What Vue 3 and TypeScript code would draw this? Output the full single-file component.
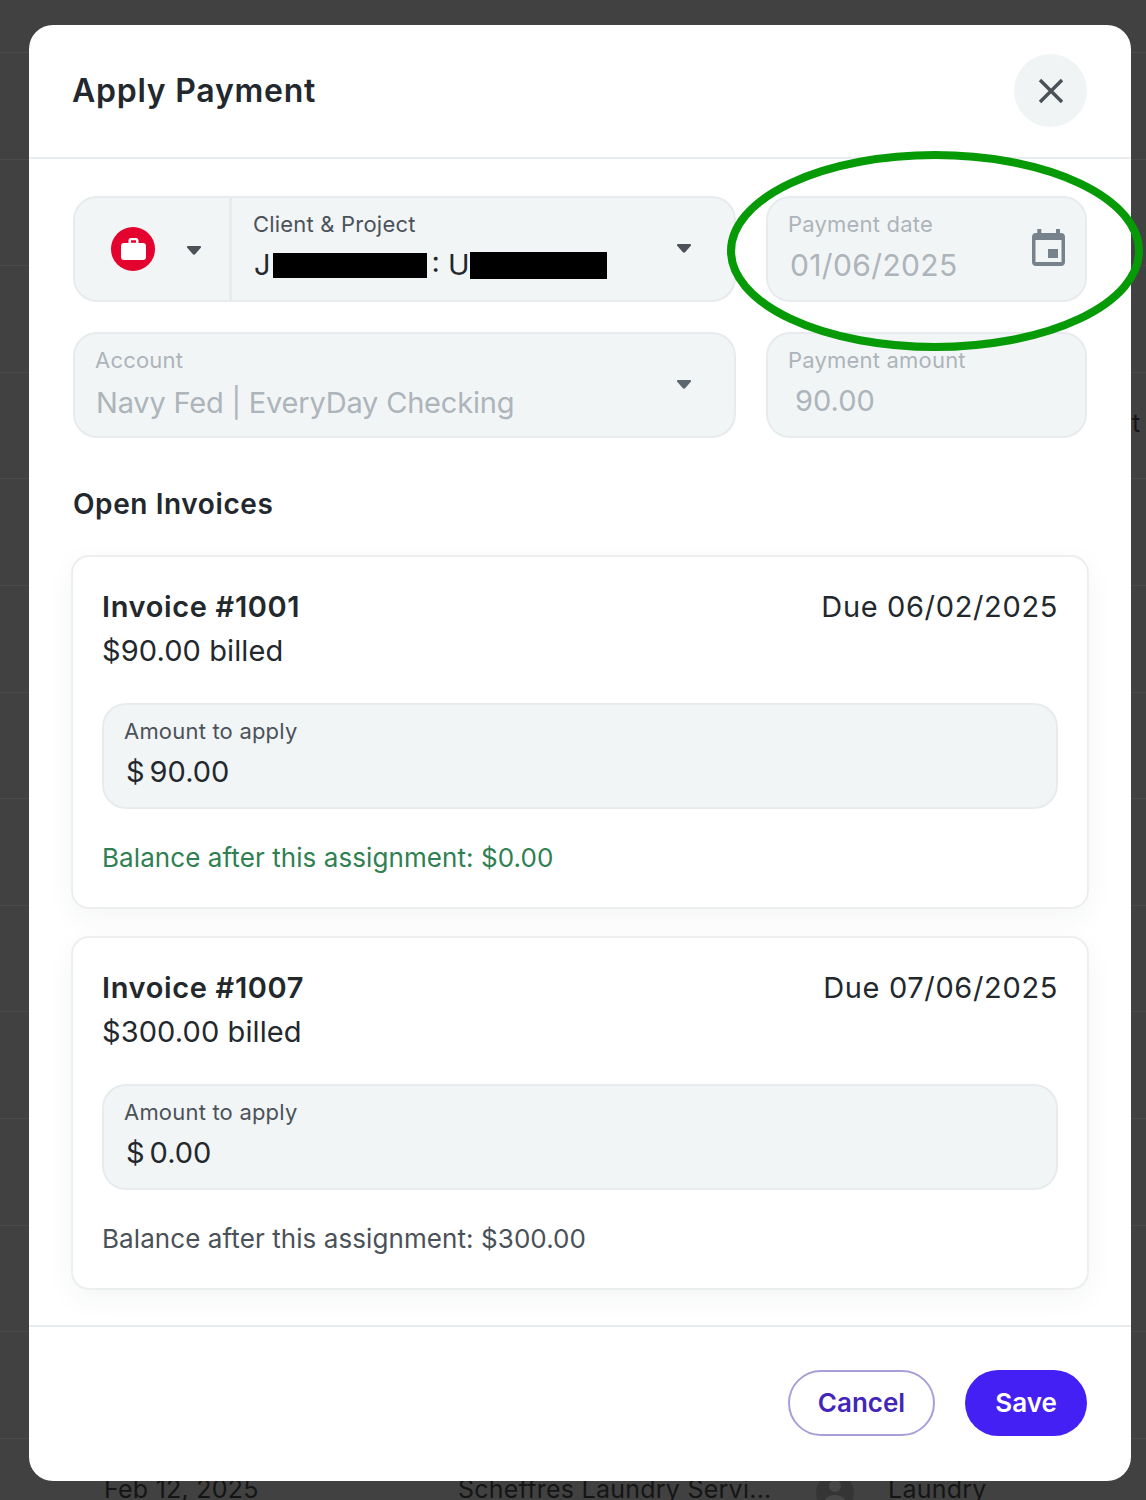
<script setup lang="ts">
interface Invoice {
  id: string
  due: string
  billed: string
  amount: string
  balance: string
  paid: boolean
}

const invoices: Invoice[] = [
  { id: 'Invoice #1001', due: 'Due 06/02/2025', billed: '$90.00 billed', amount: '90.00', balance: 'Balance after this assignment: $0.00', paid: true },
  { id: 'Invoice #1007', due: 'Due 07/06/2025', billed: '$300.00 billed', amount: '0.00', balance: 'Balance after this assignment: $300.00', paid: false },
]
const rows = Array.from({ length: 14 })
const caretPath = 'M1 0h12c1 0 1.400 1 .8 1.800L8.100 8.200c-.6.600-1.600.600-2.200 0L.2 1.800C-.4 1 0 0 1 0z'
</script>

<template>
  <div class="page">
    <div class="backdrop">
      <div v-for="(_, i) in rows" :key="i" class="bg-row"></div>
      <div class="bg-last">
        <span class="bg-date">Feb 12, 2025</span>
        <span class="bg-name">Scheffres Laundry Servi...</span>
        <svg class="bg-avatar" width="38" height="38" viewBox="0 0 38 38">
          <circle cx="19" cy="19" r="19" fill="#353535" />
          <circle cx="19" cy="12" r="6" fill="#474747" />
          <path d="M8 30c0-6 5-9 11-9s11 3 11 9z" fill="#474747" />
        </svg>
        <span class="bg-cat">Laundry</span>
      </div>
    </div>
    <span class="bg-t">t</span>

    <section class="modal">
      <header class="head">
        <h1>Apply Payment</h1>
        <button class="close" aria-label="Close">
          <svg width="28" height="28" viewBox="0 0 28 28"><path d="M3 3 L25 25 M25 3 L3 25" stroke="#4a5158" stroke-width="3.400" fill="none" /></svg>
        </button>
      </header>

      <div class="body">
        <div class="fields">
          <div class="field client">
            <div class="picker">
              <span class="badge">
                <svg width="25" height="22" viewBox="0 0 25 22"><path d="M7.500 5V2.500C7.500 1 8.500 0 10 0h5c1.500 0 2.500 1 2.500 2.500V5H22c2 0 3 1 3 3v11c0 2-1 3-3 3H3c-2 0-3-1-3-3V8c0-2 1-3 3-3zm2.500-.2h5V2.300h-5z" fill="#fff" fill-rule="evenodd" /></svg>
              </span>
              <svg class="caret picker-caret" width="14" height="9" viewBox="0 0 14 9"><path :d="caretPath" fill="#4d5258" /></svg>
            </div>
            <div class="client-main">
              <label class="lab dark-lab">Client &amp; Project</label>
              <div class="val client-val">
                <span>J</span><i class="redact r1"></i><span class="colon">: U</span><i class="redact r2"></i>
              </div>
            </div>
            <svg class="caret right" width="14" height="9" viewBox="0 0 14 9"><path :d="caretPath" fill="#4d5258" /></svg>
          </div>

          <div class="field muted">
            <label class="lab">Payment date</label>
            <div class="val date">01/06/2025</div>
            <svg class="cal" width="33" height="37" viewBox="0 0 33 37"><path d="M5.300 0h4v4h14.700V0h4v4H29c2.500 0 4 1.500 4 4v25c0 2.500-1.500 4-4 4H4c-2.500 0-4-1.500-4-4V8c0-2.500 1.500-4 4-4h1.300zM3.500 11v22h26V11zM16 20h10v9H16z" fill="#76838d" fill-rule="evenodd" /></svg>
          </div>

          <div class="field muted">
            <label class="lab">Account</label>
            <div class="val acct">Navy Fed | EveryDay Checking</div>
            <svg class="caret right" width="14" height="9" viewBox="0 0 14 9"><path :d="caretPath" fill="#5c6770" /></svg>
          </div>

          <div class="field muted">
            <label class="lab">Payment amount</label>
            <div class="val amt">90.00</div>
          </div>
        </div>

        <h2>Open Invoices</h2>

        <article v-for="inv in invoices" :key="inv.id" class="card">
          <div class="card-top">
            <div>
              <div class="inv-id">{{ inv.id }}</div>
              <div class="inv-billed">{{ inv.billed }}</div>
            </div>
            <div class="inv-due">{{ inv.due }}</div>
          </div>
          <div class="apply">
            <label class="lab dark-lab">Amount to apply</label>
            <div class="val apply-val"><span class="cur">$</span>{{ inv.amount }}</div>
          </div>
          <div class="balance" :class="{ paid: inv.paid }">{{ inv.balance }}</div>
        </article>
      </div>

      <footer class="foot">
        <button class="btn cancel">Cancel</button>
        <button class="btn save">Save</button>
      </footer>
    </section>

    <svg class="ring" width="424" height="208" viewBox="0 0 424 208">
      <ellipse cx="212" cy="104" rx="204" ry="96" fill="none" stroke="#069a06" stroke-width="8" />
    </svg>
  </div>
</template>

<style>
html, body { margin: 0; padding: 0; }
</style>

<style scoped>
.page {
  position: relative;
  width: 1146px;
  height: 1500px;
  overflow: hidden;
  background: #414142;
  font-family: Inter, "Noto Sans", sans-serif;
  color: #23282d;
}
.backdrop { padding-top: 52px; }
.bg-row { height: 105.600px; border-top: 1px solid #4a4a4b; }
.bg-last {
  position: absolute;
  left: 0;
  top: 1474px;
  width: 100%;
  height: 26px;
  overflow: hidden;
  font-size: 25px;
  line-height: 30px;
  letter-spacing: 0.250px;
  color: #151515;
}
.bg-last span, .bg-avatar { position: absolute; top: 0; white-space: nowrap; }
.bg-date { left: 104px; }
.bg-name { left: 458px; }
.bg-avatar { left: 816px; }
.bg-cat { left: 888px; }
.bg-t { position: absolute; left: 1132px; top: 408px; font-size: 25px; line-height: 30px; color: #151515; }

.modal {
  position: absolute;
  left: 29px;
  top: 25px;
  width: 1102px;
  height: 1456px;
  background: #fff;
  border-radius: 24px;
  display: flex;
  flex-direction: column;
  overflow: hidden;
}
.head {
  flex: none;
  border-bottom: 2px solid #e9ecee;
  padding: 29px 44px 0;
  display: flex;
  justify-content: space-between;
  align-items: flex-start;
  height: 103px;
}
h1 { margin: 0 0 0 -1px; font-size: 32px; font-weight: 600; line-height: 73px; letter-spacing: 0.750px; color: #22282d; }
.close {
  width: 73px;
  height: 73px;
  border: 0;
  padding: 0;
  border-radius: 50%;
  background: #f1f4f5;
  display: flex;
  align-items: center;
  justify-content: center;
}
.body { padding: 37px 44px 0; flex: 1; }
.fields {
  display: grid;
  grid-template-columns: 663px 321px;
  grid-auto-rows: 106px;
  gap: 30px;
}
.field {
  position: relative;
  background: #f2f5f6;
  border: 2px solid #e8ebed;
  border-radius: 24px;
  box-sizing: border-box;
  padding: 12px 20px 0;
}
.lab { display: block; font-size: 22px; line-height: 28px; letter-spacing: 0.200px; color: #adb4ba; white-space: nowrap; }
.dark-lab { color: #4b5259; }
.val { font-size: 29px; line-height: 36px; margin: 9px 0 0 2px; color: #adb4ba; white-space: nowrap; }
.date { font-size: 30px; letter-spacing: 0.350px; }
.acct { margin-top: 11px; letter-spacing: -0.200px; margin-left: 1px; }
.amt { margin: 9px 0 0 7px; }
.client { display: flex; padding: 0; }
.picker {
  width: 157px;
  flex: none;
  border-right: 3px solid #e8ebed;
  box-sizing: border-box;
  display: flex;
  align-items: center;
  padding-left: 36px;
  gap: 32px;
}
.badge {
  width: 44px;
  height: 44px;
  flex: none;
  border-radius: 50%;
  background: #e4032e;
  display: flex;
  align-items: center;
  justify-content: center;
}
.caret { flex: none; display: block; }
.picker-caret { margin-top: 2px; }
.caret.right { position: absolute; right: 43px; top: 46px; }
.client-main { padding: 12px 20px 0 21px; }
.client-val { color: #23282d; display: flex; align-items: center; margin-left: 1px; }
.redact { display: block; background: #000; height: 25px; }
.r1 { width: 154px; margin-left: 2px; }
.r2 { width: 137px; height: 27px; }
.colon { margin: 0 0 0 5px; }
.cal { position: absolute; right: 20px; top: 31px; }

h2 { margin: 47px 0 32px; font-size: 28px; font-weight: 600; line-height: 38px; letter-spacing: 0.600px; color: #22282d; }

.card {
  margin: 0 -2px 27px;
  border: 2px solid #eceef0;
  border-radius: 18px;
  box-shadow: 0 8px 28px rgba(40, 50, 60, 0.05);
  padding: 30px 29px 0;
  background: #fff;
}
.card-top { display: flex; justify-content: space-between; align-items: flex-start; }
.inv-id { font-size: 29px; font-weight: 600; line-height: 40px; letter-spacing: 0.650px; }
.inv-billed { font-size: 29px; line-height: 40px; margin-top: 4px; letter-spacing: 0.100px; }
.inv-due { font-size: 29px; line-height: 40px; letter-spacing: 0.650px; }
.apply {
  margin-top: 32px;
  height: 106px;
  box-sizing: border-box;
  background: #f2f5f6;
  border: 2px solid #e8ebed;
  border-radius: 24px;
  padding: 12px 20px 0;
}
.apply-val { color: #23282d; margin-top: 9px; }
.cur { margin-right: 5px; }
.balance { font-size: 26px; line-height: 36px; letter-spacing: 0.080px; margin: 31px 0 31px; color: #4a5158; }
.balance.paid { color: #2f8052; }

.foot {
  flex: none;
  border-top: 2px solid #e9ecee;
  height: 156px;
  box-sizing: border-box;
  padding: 43px 44px 0;
  display: flex;
  justify-content: flex-end;
  gap: 30px;
  margin-top: auto;
}
.btn {
  height: 66px;
  border-radius: 33px;
  font-family: inherit;
  font-size: 26px;
  font-weight: 600;
  padding: 0 0 2px;
}
.cancel { width: 147px; background: #fff; border: 2px solid #a99fd8; color: #4326b8; }
.save { width: 122px; background: #4520f5; border: 0; color: #fff; }
.ring { position: absolute; left: 723px; top: 147px; pointer-events: none; }
</style>
